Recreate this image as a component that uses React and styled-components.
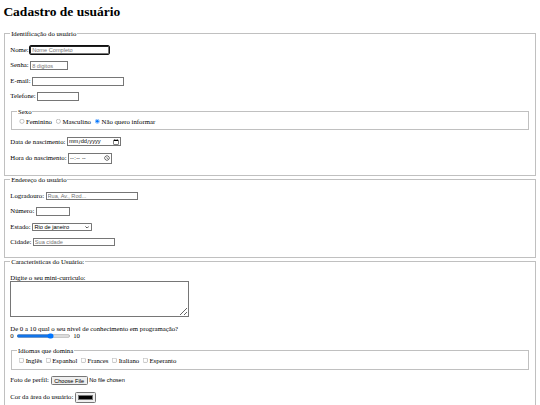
import styled, { createGlobalStyle, css } from 'styled-components';

const GlobalStyle = createGlobalStyle`
  html, body {
    margin: 0;
    background: #fff;
  }
`;

const Page = styled.div`
  zoom: 0.421875;
  padding: 8px;
  font-family: "Liberation Serif", "Times New Roman", serif;
  font-size: 16px;
  color: #000;
`;

const Title = styled.h1`
  font-size: 32px;
  font-weight: 700;
  margin: 2px 0 22px;
`;

const Fieldset = styled.fieldset`
  margin: 0 2px;
  padding: 0.35em 0.75em 0.625em;
  border: 2px groove rgb(192, 192, 192);
  min-width: 0;
`;

const Legend = styled.legend`
  padding: 0 2px;
`;

const Row = styled.p`
  margin: 16px 0;
`;

const Label = styled.label``;

const control = css`
  font-family: "Liberation Sans", Arial, sans-serif;
  font-size: 13.333px;
`;

const TextInput = styled.input`
  ${control}
  width: ${p => p.$w}px;
  ${p => p.$focused && css`
    outline: 2px solid #101010;
    outline-offset: 0;
    border-radius: 2px;
  `}
`;

const SelectWrap = styled.span`
  position: relative;
  display: inline-block;
`;

const Select = styled.select`
  ${control}
  appearance: none;
  width: ${p => p.$w}px;
  height: 19px;
  padding: 0 18px 0 3px;
  border: 1px solid #767676;
  border-radius: 2px;
  background: #fff;
  color: #000;
`;

const Chevron = styled.svg`
  position: absolute;
  right: 6px;
  top: 7px;
  width: 10px;
  height: 6px;
  pointer-events: none;
`;

const TextArea = styled.textarea`
  width: 414px;
  height: 75px;
  resize: both;
`;

const Range = styled.input`
  width: 129px;
  vertical-align: middle;
`;

const FileInput = styled.input`
  ${control}
`;

const ColorInput = styled.input`
  vertical-align: middle;
`;

const sexos = [
  { id: 'fem', label: 'Feminino' },
  { id: 'mas', label: 'Masculino' },
  { id: 'nao', label: 'Não quero informar', checked: true },
];

const idiomas = ['Inglês', 'Espanhol', 'Frances', 'Italiano', 'Esperanto'];

const estados = ['Rio de janeiro', 'São Paulo', 'Minas Gerais', 'Espírito Santo'];

function App() {
  return (
    <>
      <GlobalStyle />
      <Page>
        <Title>Cadastro de usuário</Title>
        <form onSubmit={e => e.preventDefault()}>
          <Fieldset>
            <Legend>Identificação do usuário</Legend>
            <Row>
              <Label htmlFor="nome">Nome:</Label>{' '}
              <TextInput id="nome" type="text" placeholder="Nome Completo" $w={178} $focused />
            </Row>
            <Row>
              <Label htmlFor="senha">Senha:</Label>{' '}
              <TextInput id="senha" type="password" placeholder="8 digitos" maxLength={8} $w={80} />
            </Row>
            <Row>
              <Label htmlFor="email">E-mail:</Label>{' '}
              <TextInput id="email" type="email" $w={208} />
            </Row>
            <Row>
              <Label htmlFor="tel">Telefone:</Label>{' '}
              <TextInput id="tel" type="tel" $w={89} />
            </Row>
            <Fieldset>
              <Legend>Sexo</Legend>
              {sexos.map(s => (
                <span key={s.id}>
                  <input type="radio" name="sexo" id={s.id} defaultChecked={s.checked} />
                  <Label htmlFor={s.id}>{s.label}</Label>{' '}
                </span>
              ))}
            </Fieldset>
            <Row>
              <Label htmlFor="nasc">Data de nascimento:</Label>{' '}
              <TextInput id="nasc" type="date" />
            </Row>
            <Row>
              <Label htmlFor="hora">Hora do nascimento:</Label>{' '}
              <TextInput id="hora" type="time" />
            </Row>
          </Fieldset>

          <Fieldset>
            <Legend>Endereço do usuário</Legend>
            <Row>
              <Label htmlFor="logra">Logradouro:</Label>{' '}
              <TextInput id="logra" type="text" placeholder="Rua, Av., Rod..." $w={210} />
            </Row>
            <Row>
              <Label htmlFor="num">Número:</Label>{' '}
              <TextInput id="num" type="number" $w={73} />
            </Row>
            <Row>
              <Label htmlFor="estado">Estado:</Label>{' '}
              <SelectWrap>
                <Select id="estado" defaultValue="Rio de janeiro" $w={141}>
                  {estados.map(e => <option key={e}>{e}</option>)}
                </Select>
                <Chevron viewBox="0 0 10 6">
                  <path d="M1 1l4 4 4-4" fill="none" stroke="#000" strokeWidth="1.6" />
                </Chevron>
              </SelectWrap>
            </Row>
            <Row>
              <Label htmlFor="cidade">Cidade:</Label>{' '}
              <TextInput id="cidade" type="text" placeholder="Sua cidade" $w={185} />
            </Row>
          </Fieldset>

          <Fieldset>
            <Legend>Características do Usuário:</Legend>
            <Row>
              <Label htmlFor="curriculo">Digite o seu mini-curriculo:</Label>
              <br />
              <TextArea id="curriculo" />
            </Row>
            <Row>
              <Label htmlFor="nivel">De 0 a 10 qual o seu nivel de conhecimento em programação?</Label>
              <br />
              0 <Range id="nivel" type="range" min={0} max={10} step={0.5} defaultValue={6.5} /> 10
            </Row>
            <Fieldset>
              <Legend>Idiomas que domina</Legend>
              {idiomas.map(i => (
                <span key={i}>
                  <input type="checkbox" id={i} />
                  <Label htmlFor={i}>{i}</Label>{' '}
                </span>
              ))}
            </Fieldset>
            <Row>
              <Label htmlFor="foto">Foto de perfil:</Label>{' '}
              <FileInput id="foto" type="file" />
            </Row>
            <Row>
              <Label htmlFor="cor">Cor da área do usuário:</Label>{' '}
              <ColorInput id="cor" type="color" defaultValue="#000000" />
            </Row>
          </Fieldset>
        </form>
      </Page>
    </>
  );
}

export default App;
